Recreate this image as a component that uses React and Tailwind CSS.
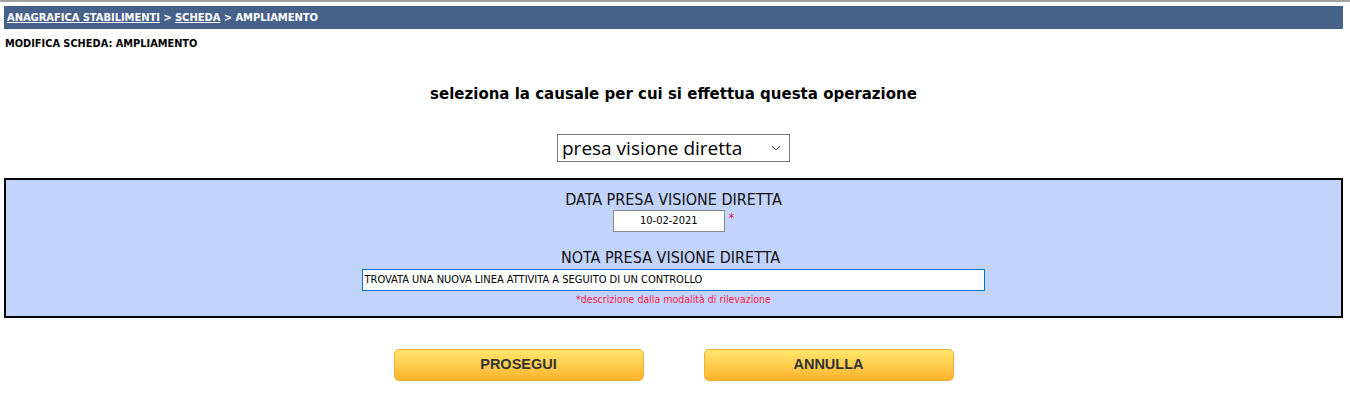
export default function App() {
  return (
    <div className="w-[1350px] h-[406px] bg-white border-t-2 border-[#a3a3a3]">
      <div className="pl-[4px] pr-[7px] pt-[4px]">
        <div className="h-[23px] bg-[#46618a] flex items-center pl-[3px] text-white font-bold text-[10px] tracking-[-0.08px] font-['DejaVu_Sans',sans-serif]">
          <span className="underline">ANAGRAFICA STABILIMENTI</span>
          <span>&nbsp;&gt;&nbsp;</span>
          <span className="underline">SCHEDA</span>
          <span>&nbsp;&gt; AMPLIAMENTO</span>
        </div>
        <div className="mt-[8px] h-[14px] flex items-center pl-[1px] text-black font-bold text-[9.8px] font-['DejaVu_Sans',sans-serif]">
          MODIFICA SCHEDA: AMPLIAMENTO
        </div>
        <div className="mt-[33px] text-center text-black font-bold text-[15px] leading-[20px] font-['DejaVu_Sans',sans-serif]">
          seleziona la causale per cui si effettua questa operazione
        </div>
        <div className="mt-[30px] flex justify-center">
          <div className="w-[233px] h-[28px] border border-[#7a7a7a] bg-white flex items-center justify-between pl-[4px] pr-[6px]">
            <span className="text-[19px] text-black font-['Open_Sans',sans-serif]">presa visione diretta</span>
            <svg width="10" height="6" viewBox="0 0 10 6" className="mr-[2px]">
              <path d="M1 1 L5 5 L9 1" fill="none" stroke="#555" strokeWidth="1" />
            </svg>
          </div>
        </div>
        <div className="mt-[16px] h-[140px] border-2 border-black bg-[#c2d3fc] flex flex-col items-center font-['DejaVu_Sans_Condensed','DejaVu_Sans',sans-serif]">
          <div className="mt-[12px] text-[16px] leading-[16px] text-[#111]">DATA PRESA VISIONE DIRETTA</div>
          <div className="mt-[2px] flex items-start">
            <div className="w-[112px] h-[22px] border border-[#8a8a8a] bg-white flex items-center justify-center text-[11px] text-black">10-02-2021</div>
            <span className="ml-[4px] text-[#e0105a] text-[12px] leading-[14px] mt-[1px]">*</span>
          </div>
          <div className="mt-[18px] text-[16px] leading-[16px] text-[#111] -ml-[6px]">NOTA PRESA VISIONE DIRETTA</div>
          <div className="mt-[3px] w-[623px] h-[22px] border border-[#0a74d4] bg-white flex items-center pl-[2px] text-[11px] text-black -ml-[1px]">
            TROVATA UNA NUOVA LINEA ATTIVITA A SEGUITO DI UN CONTROLLO
          </div>
          <div className="mt-[1px] text-[10.5px] text-[#ff1a40] leading-[14px]">*descrizione dalla modalità di rilevazione</div>
        </div>
        <div className="mt-[31px] flex justify-center gap-[60px] font-['Liberation_Sans',Arial,sans-serif]">
          <button className="w-[250px] h-[32px] rounded-[5px] border border-[#f3ad3a] bg-gradient-to-b from-[#ffe76a] to-[#ffb22a] text-[#333] font-bold text-[14.5px]">PROSEGUI</button>
          <button className="w-[250px] h-[32px] rounded-[5px] border border-[#f3ad3a] bg-gradient-to-b from-[#ffe76a] to-[#ffb22a] text-[#333] font-bold text-[14.5px]">ANNULLA</button>
        </div>
      </div>
    </div>
  );
}
